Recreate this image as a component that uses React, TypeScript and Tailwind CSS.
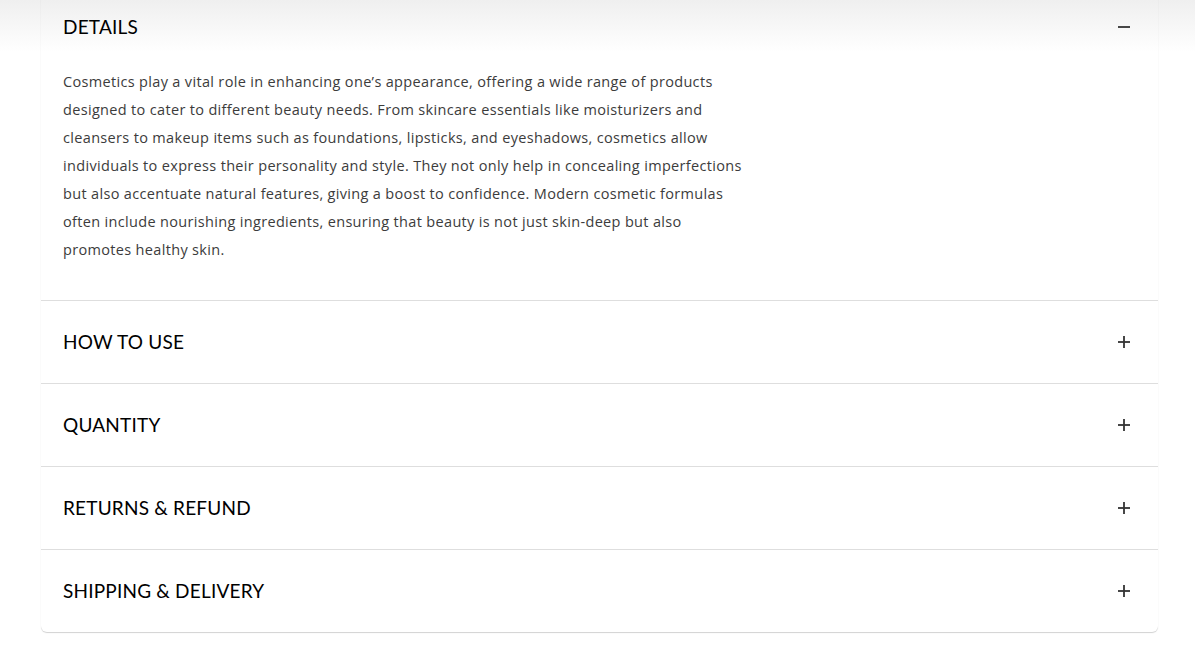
import { useState } from "react";

const sections = [
  {
    title: "DETAILS",
    body: "Cosmetics play a vital role in enhancing one’s appearance, offering a wide range of products designed to cater to different beauty needs. From skincare essentials like moisturizers and cleansers to makeup items such as foundations, lipsticks, and eyeshadows, cosmetics allow individuals to express their personality and style. They not only help in concealing imperfections but also accentuate natural features, giving a boost to confidence. Modern cosmetic formulas often include nourishing ingredients, ensuring that beauty is not just skin-deep but also promotes healthy skin.",
  },
  { title: "HOW TO USE", body: "" },
  { title: "QUANTITY", body: "" },
  { title: "RETURNS & REFUND", body: "" },
  { title: "SHIPPING & DELIVERY", body: "" },
];

function PlusMinus({ open }: { open: boolean }) {
  return (
    <svg width="12" height="12" viewBox="0 0 12 12" className="text-[#333]">
      <path d="M0 6h12" stroke="currentColor" strokeWidth="1.8" />
      {!open && <path d="M6 0v12" stroke="currentColor" strokeWidth="1.8" />}
    </svg>
  );
}

export default function App() {
  const [open, setOpen] = useState(0);

  return (
    <div className="min-h-screen bg-[linear-gradient(to_bottom,#efefef,#ffffff_52px)] overflow-hidden">
      <div className="ml-[41px] mr-[37px] -mt-[14px] rounded-md shadow-[0_1px_1px_rgba(0,0,0,0.18)]">
        {sections.map((s, i) => (
          <div key={s.title} className={i > 0 ? "border-t border-[#dedede]" : ""}>
            <button
              onClick={() => setOpen(open === i ? -1 : i)}
              className="w-full h-[82px] flex items-center justify-between pl-[22px] pr-[28px] text-left"
            >
              <span className="font-['Lato',sans-serif] text-[19px] text-black tracking-[0.2px]">
                {s.title}
              </span>
              <PlusMinus open={open === i} />
            </button>
            {open === i && s.body && (
              <div className="pl-[22px] pr-6 pb-[36px]">
                <p className="max-w-[680px] font-['Open_Sans',sans-serif] text-[14.5px] tracking-[0.33px] leading-[28px] text-[#3c3c3c]">
                  {s.body}
                </p>
              </div>
            )}
          </div>
        ))}
      </div>
    </div>
  );
}
